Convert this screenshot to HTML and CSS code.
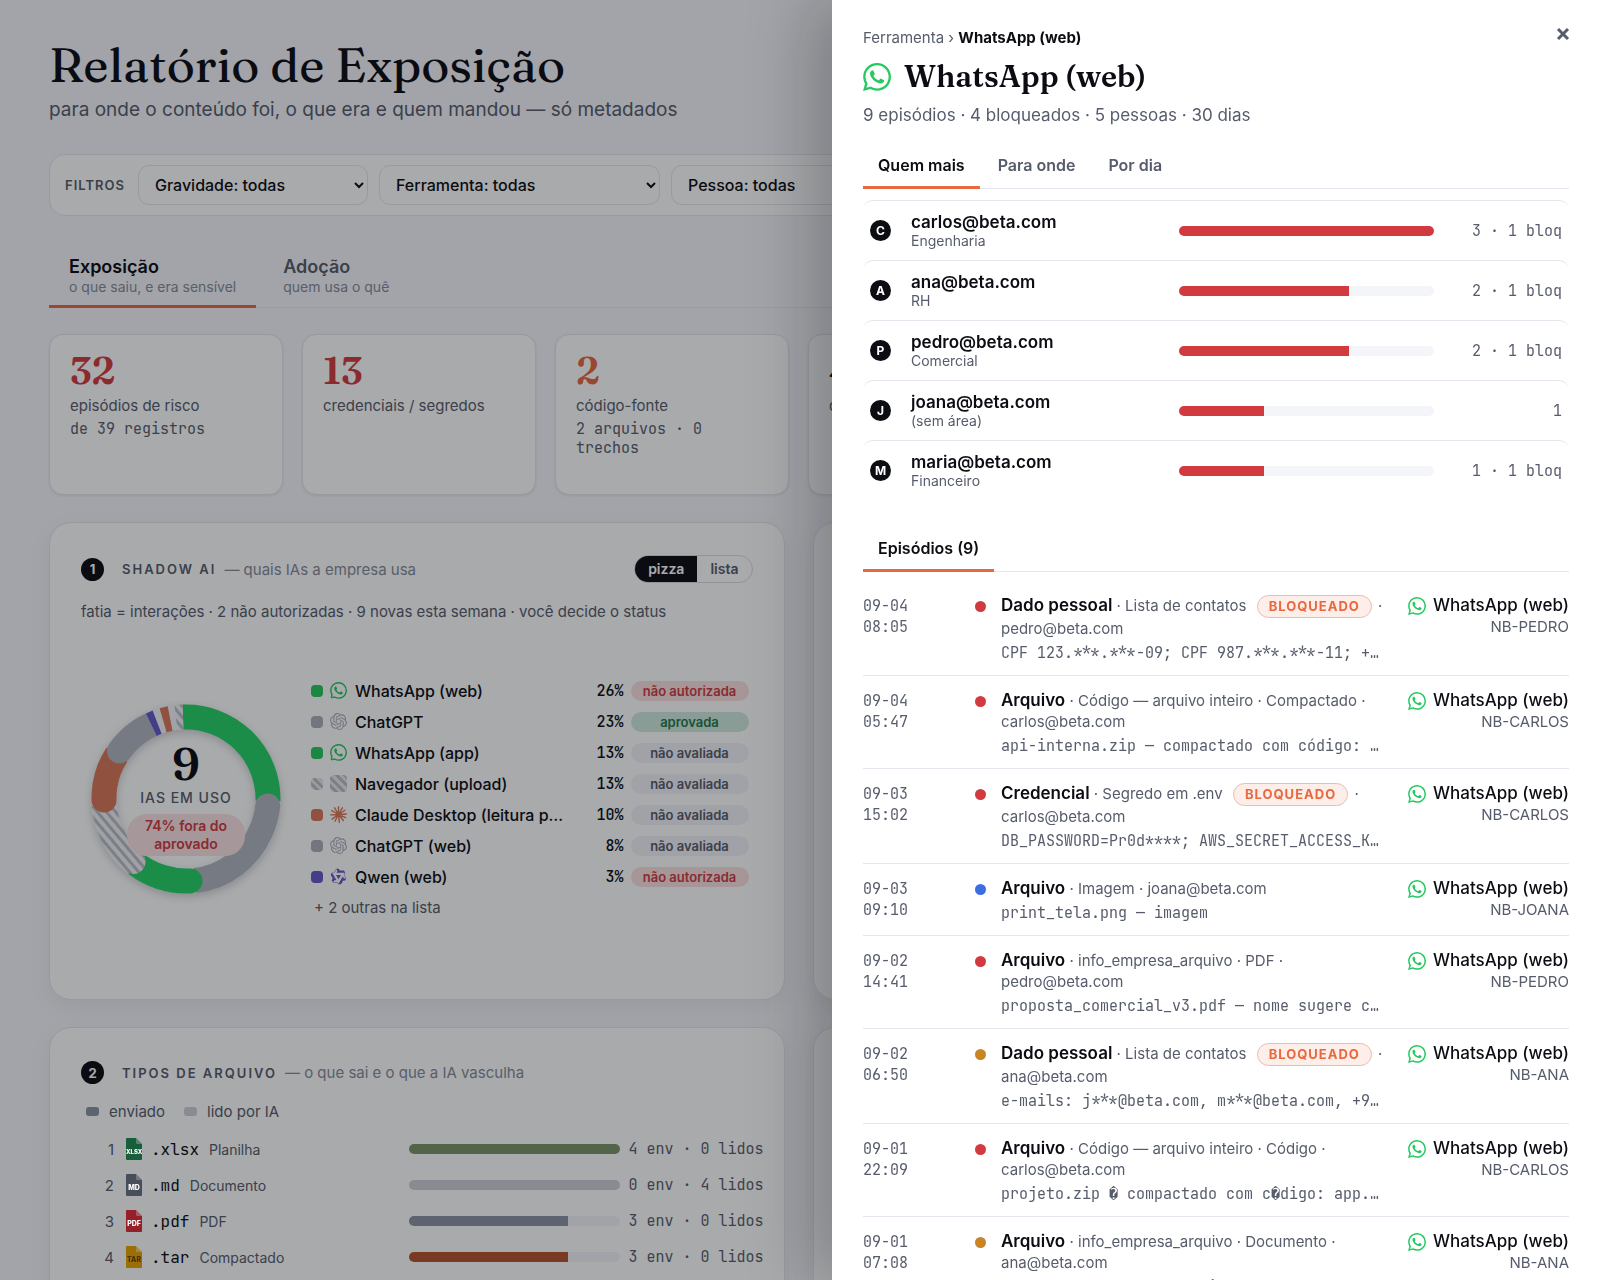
FILE: index.html
```html
<!DOCTYPE html>
<html lang="pt-BR">
<head>
  <meta charset="UTF-8" />
  <meta name="viewport" content="width=device-width, initial-scale=1" />
  <title>Relatório de Exposição</title>
  <link rel="stylesheet" href="styles.css">
</head>
<body>

<!-- ícones reutilizados -->
<svg class="sprite" aria-hidden="true">
  <symbol id="whatsapp" viewBox="0 0 24 24">
    <path d="M17.472 14.382c-.297-.149-1.758-.867-2.03-.967-.273-.099-.471-.148-.67.15-.197.297-.767.966-.94 1.164-.173.199-.347.223-.644.075-.297-.15-1.255-.463-2.39-1.475-.883-.788-1.48-1.761-1.653-2.059-.173-.297-.018-.458.13-.606.134-.133.298-.347.446-.52.149-.174.198-.298.298-.497.099-.198.05-.371-.025-.52-.075-.149-.669-1.612-.916-2.207-.242-.579-.487-.5-.669-.51-.173-.008-.371-.01-.57-.01-.198 0-.52.074-.792.372-.272.297-1.04 1.016-1.04 2.479 0 1.462 1.065 2.875 1.213 3.074.149.198 2.096 3.2 5.077 4.487.709.306 1.262.489 1.694.625.712.227 1.36.195 1.871.118.571-.085 1.758-.719 2.006-1.413.248-.694.248-1.289.173-1.413-.074-.124-.272-.198-.57-.347m-5.421 7.403h-.004a9.87 9.87 0 01-5.031-1.378l-.361-.214-3.741.982.998-3.648-.235-.374a9.86 9.86 0 01-1.51-5.26c.001-5.45 4.436-9.884 9.888-9.884 2.64 0 5.122 1.03 6.988 2.898a9.825 9.825 0 012.893 6.994c-.003 5.45-4.437 9.884-9.885 9.884m8.413-18.297A11.815 11.815 0 0012.05 0C5.495 0 .16 5.335.157 11.892c0 2.096.547 4.142 1.588 5.945L.057 24l6.305-1.654a11.882 11.882 0 005.683 1.448h.005c6.554 0 11.89-5.335 11.893-11.893a11.821 11.821 0 00-3.48-8.413z"/>
  </symbol>
  <symbol id="openai" viewBox="0 0 24 24">
    <path d="M22.2819 9.8211a5.9847 5.9847 0 0 0-.5157-4.9108 6.0462 6.0462 0 0 0-6.5098-2.9A6.0651 6.0651 0 0 0 4.9807 4.1818a5.9847 5.9847 0 0 0-3.9977 2.9 6.0462 6.0462 0 0 0 .7427 7.0966 5.98 5.98 0 0 0 .511 4.9107 6.051 6.051 0 0 0 6.5146 2.9001A5.9847 5.9847 0 0 0 13.2599 24a6.0557 6.0557 0 0 0 5.7718-4.2058 5.9894 5.9894 0 0 0 3.9977-2.9001 6.0557 6.0557 0 0 0-.7475-7.0729zm-9.022 12.6081a4.4755 4.4755 0 0 1-2.8764-1.0408l.1419-.0804 4.7783-2.7582a.7948.7948 0 0 0 .3927-.6813v-6.7369l2.02 1.1686a.071.071 0 0 1 .038.052v5.5826a4.504 4.504 0 0 1-4.4945 4.4944zm-9.6607-4.1254a4.4708 4.4708 0 0 1-.5346-3.0137l.142.0852 4.783 2.7582a.7712.7712 0 0 0 .7806 0l5.8428-3.3685v2.3324a.0804.0804 0 0 1-.0332.0615L9.74 19.9502a4.4992 4.4992 0 0 1-6.1408-1.6464zM2.3408 7.8956a4.485 4.485 0 0 1 2.3655-1.9728V11.6a.7664.7664 0 0 0 .3879.6765l5.8144 3.3543-2.0201 1.1685a.0757.0757 0 0 1-.071 0l-4.8303-2.7865A4.504 4.504 0 0 1 2.3408 7.872zm16.5963 3.8558L13.1038 8.364 15.1192 7.2a.0757.0757 0 0 1 .071 0l4.8303 2.7913a4.4944 4.4944 0 0 1-.6765 8.1042v-5.6772a.79.79 0 0 0-.407-.667zm2.0107-3.0231l-.142-.0852-4.7735-2.7818a.7759.7759 0 0 0-.7854 0L9.409 9.2297V6.8974a.0662.0662 0 0 1 .0284-.0615l4.8303-2.7866a4.4992 4.4992 0 0 1 6.6802 4.66zM8.3065 12.863l-2.02-1.1638a.0804.0804 0 0 1-.038-.0567V6.0742a4.4992 4.4992 0 0 1 7.3757-3.4537l-.142.0805L8.704 5.459a.7948.7948 0 0 0-.3927.6813zm1.0976-2.3654l2.602-1.4998 2.6069 1.4998v2.9994l-2.5974 1.4997-2.6067-1.4997Z"/>
  </symbol>
  <symbol id="claude" viewBox="0 0 24 24">
    <path d="M12 12V1M12 12l5.5-9.500M12 12l9-6M12 12l11-.8M12 12l10 4.500M12 12l6.800 8.500M12 12l1.200 11M12 12l-5 9.500M12 12l-9 6.500M12 12L1 12.500M12 12L2.500 6.500M12 12L6.500 2.500" fill="none" stroke="currentColor" stroke-width="2" stroke-linecap="round"/>
  </symbol>
  <symbol id="qwen" viewBox="0 0 24 24">
    <path fill-rule="evenodd" d="M12.604 1.34c.393.69.784 1.382 1.174 2.075a.18.18 0 00.157.091h5.552c.174 0 .322.11.446.327l1.454 2.57c.19.337.24.478.024.837-.26.43-.513.864-.76 1.3l-.367.658c-.106.196-.223.28-.04.512l2.652 4.637c.172.301.111.494-.043.77-.437.785-.882 1.564-1.335 2.34-.159.272-.352.375-.68.37-.777-.016-1.552-.01-2.327.016a.099.099 0 00-.081.05 575.097 575.097 0 01-2.705 4.74c-.169.293-.38.363-.725.364-.997.003-2.002.004-3.017.002a.537.537 0 01-.465-.271l-1.335-2.323a.09.09 0 00-.083-.049H4.982c-.285.03-.553-.001-.805-.092l-1.603-2.77a.543.543 0 01-.002-.54l1.207-2.12a.198.198 0 000-.197 550.951 550.951 0 01-1.875-3.272l-.79-1.395c-.16-.31-.173-.496.095-.965.465-.813.927-1.625 1.387-2.436.132-.234.304-.334.584-.335a338.3 338.3 0 012.589-.001.124.124 0 00.107-.063l2.806-4.895a.488.488 0 01.422-.246c.524-.001 1.053 0 1.583-.006L11.704 1c.341-.003.724.032.9.34zm-3.432.403a.06.06 0 00-.052.03L6.254 6.788a.157.157 0 01-.135.078H3.253c-.056 0-.07.025-.041.074l5.81 10.156c.025.042.013.062-.034.063l-2.795.015a.218.218 0 00-.2.116l-1.32 2.31c-.044.078-.021.118.068.118l5.716.008c.046 0 .08.02.104.061l1.403 2.454c.046.081.092.082.139 0l5.006-8.76.783-1.382a.055.055 0 01.096 0l1.424 2.53a.122.122 0 00.107.062l2.763-.02a.04.04 0 00.035-.02.041.041 0 000-.04l-2.9-5.086a.108.108 0 010-.113l.293-.507 1.12-1.977c.024-.041.012-.062-.035-.062H9.2c-.059 0-.073-.026-.043-.077l1.434-2.505a.107.107 0 000-.114L9.225 1.774a.06.06 0 00-.053-.031zm6.29 8.02c.046 0 .058.02.034.06l-.832 1.465-2.613 4.585a.056.056 0 01-.05.029.058.058 0 01-.05-.029L8.498 9.841c-.02-.034-.01-.052.028-.054l.216-.012 6.722-.012z"/>
  </symbol>
  <symbol id="file" viewBox="0 0 16 22">
    <path d="M1 0h9l6 6v15a1 1 0 0 1-1 1H1a1 1 0 0 1-1-1V1a1 1 0 0 1 1-1z"/>
    <path d="M10 0l6 6h-5a1 1 0 0 1-1-1z" fill="#fff" fill-opacity=".45"/>
  </symbol>
</svg>

<main class="page">
  <h1>Relatório de Exposição</h1>
  <p class="lead">para onde o conteúdo foi, o que era e quem mandou — só metadados</p>

  <form class="filters">
    <span class="filters-title">Filtros</span>
    <select class="f-grav" aria-label="Gravidade"><option>Gravidade: todas</option></select>
    <select class="f-ferr" aria-label="Ferramenta"><option>Ferramenta: todas</option></select>
    <select class="f-pess" aria-label="Pessoa"><option>Pessoa: todas</option></select>
  </form>

  <nav class="views">
    <button type="button" class="view active">Exposição<small>o que saiu, e era sensível</small></button>
    <button type="button" class="view">Adoção<small>quem usa o quê</small></button>
  </nav>

  <section class="kpis">
    <div class="kpi"><b class="red">32</b><span>episódios de risco</span><code>de 39 registros</code></div>
    <div class="kpi"><b class="red">13</b><span>credenciais / segredos</span></div>
    <div class="kpi"><b class="orange">2</b><span>código-fonte</span><code>2 arquivos · 0 trechos</code></div>
    <div class="kpi"><b>4</b><span>dados pessoais</span></div>
    <div class="kpi"></div>
    <div class="kpi"></div>
  </section>

  <div class="panels">
    <section class="panel">
      <header class="panel-head">
        <span class="num">1</span>
        <h2>Shadow AI</h2>
        <span class="hint">— quais IAs a empresa usa</span>
        <div class="toggle">
          <button type="button" class="on">pizza</button><button type="button">lista</button>
        </div>
      </header>
      <p class="note">fatia = interações · 2 não autorizadas · 9 novas esta semana · você decide o status</p>

      <div class="ai">
        <div class="donut">
          <svg viewBox="0 0 190 190" aria-hidden="true">
            <defs>
              <pattern id="stripes" width="7" height="7" patternUnits="userSpaceOnUse" patternTransform="rotate(50)">
                <rect width="7" height="7" fill="#f1f2f5"/>
                <rect width="7" height="3" fill="#b9bdc6"/>
              </pattern>
            </defs>
            <g class="ring">
              <circle class="seg base" cx="95" cy="95" r="82"/>
              <path class="seg s-green" d="M92 13.100A82 82 0 0 1 177 97"/>
              <path class="seg s-grey round" d="M176.700 102A82 82 0 0 1 170 127"/>
              <path class="seg s-grey" d="M170 127A82 82 0 0 1 104 176.500"/>
              <path class="seg s-green round" d="M99 176.900A82 82 0 0 1 70 173"/>
              <path class="seg s-green" d="M70 173A82 82 0 0 1 45 160"/>
              <path class="seg s-stripe round" d="M42 157.600A82 82 0 0 1 22 132"/>
              <path class="seg s-stripe" d="M22 132A82 82 0 0 1 13.200 101"/>
              <path class="seg s-orange round" d="M13 96A82 82 0 0 1 18 66"/>
              <path class="seg s-orange" d="M18 66A82 82 0 0 1 26 50.500"/>
              <path class="seg s-grey round" d="M28.500 47A82 82 0 0 1 38 36"/>
              <path class="seg s-grey" d="M38 36A82 82 0 0 1 60.300 20.700"/>
              <path class="seg s-violet" d="M60.300 20.700A82 82 0 0 1 66.100 18.200"/>
              <path class="seg s-orange" d="M72.100 16.300A82 82 0 0 1 79.100 14.600"/>
              <path class="seg s-stripe" d="M84.900 13.600A82 82 0 0 1 92 13.100"/>
            </g>
          </svg>
          <div class="donut-text">
            <b>9</b>
            <span>IAs em uso</span>
            <em>74% fora do aprovado</em>
          </div>
        </div>

        <ul class="ai-list">
          <li><i class="sw green"></i><svg class="ic green"><use href="#whatsapp"/></svg><span>WhatsApp (web)</span><code>26%</code><mark class="no">não autorizada</mark></li>
          <li><i class="sw grey"></i><svg class="ic grey"><use href="#openai"/></svg><span>ChatGPT</span><code>23%</code><mark class="ok">aprovada</mark></li>
          <li><i class="sw green"></i><svg class="ic green"><use href="#whatsapp"/></svg><span>WhatsApp (app)</span><code>13%</code><mark>não avaliada</mark></li>
          <li><i class="sw hatch"></i><i class="ic hatch"></i><span>Navegador (upload)</span><code>13%</code><mark>não avaliada</mark></li>
          <li><i class="sw clay"></i><svg class="ic clay"><use href="#claude"/></svg><span>Claude Desktop (leitura por IA)</span><code>10%</code><mark>não avaliada</mark></li>
          <li><i class="sw grey"></i><svg class="ic grey"><use href="#openai"/></svg><span>ChatGPT (web)</span><code>8%</code><mark>não avaliada</mark></li>
          <li><i class="sw violet"></i><svg class="ic violet"><use href="#qwen"/></svg><span>Qwen (web)</span><code>3%</code><mark class="no">não autorizada</mark></li>
          <li class="more">+ 2 outras na lista</li>
        </ul>
      </div>
    </section>
    <section class="panel"></section>

    <section class="panel">
      <header class="panel-head">
        <span class="num">2</span>
        <h2>Tipos de arquivo</h2>
        <span class="hint">— o que sai e o que a IA vasculha</span>
      </header>
      <div class="legend">
        <span><i class="sent"></i>enviado</span>
        <span><i class="read"></i>lido por IA</span>
      </div>
      <ol class="files">
        <li><span class="pos">1</span><span class="file xlsx"><svg><use href="#file"/></svg><small>XLSX</small></span><code>.xlsx</code><span class="kind">Planilha</span><div class="bar"><i class="b-olive" style="width:100%"></i></div><code class="qty">4 env · 0 lidos</code></li>
        <li><span class="pos">2</span><span class="file md"><svg><use href="#file"/></svg><small>MD</small></span><code>.md</code><span class="kind">Documento</span><div class="bar"><i class="b-light" style="width:100%"></i></div><code class="qty">0 env · 4 lidos</code></li>
        <li><span class="pos">3</span><span class="file pdf"><svg><use href="#file"/></svg><small>PDF</small></span><code>.pdf</code><span class="kind">PDF</span><div class="bar"><i class="b-slate" style="width:75%"></i></div><code class="qty">3 env · 0 lidos</code></li>
        <li><span class="pos">4</span><span class="file tar"><svg><use href="#file"/></svg><small>TAR</small></span><code>.tar</code><span class="kind">Compactado</span><div class="bar"><i class="b-rust" style="width:75%"></i></div><code class="qty">3 env · 0 lidos</code></li>
      </ol>
    </section>
    <section class="panel"></section>
  </div>
</main>

<div class="overlay"></div>

<aside class="drawer">
  <button type="button" class="close" aria-label="Fechar">
    <svg viewBox="0 0 14 14" aria-hidden="true"><path d="M2 2l10 10M12 2L2 12"/></svg>
  </button>
  <p class="crumb">Ferramenta › <b>WhatsApp (web)</b></p>
  <h2 class="drawer-title"><svg class="green"><use href="#whatsapp"/></svg>WhatsApp (web)</h2>
  <p class="summary">9 episódios · 4 bloqueados · 5 pessoas · 30 dias</p>

  <nav class="tabs">
    <button type="button" class="active">Quem mais</button>
    <button type="button">Para onde</button>
    <button type="button">Por dia</button>
  </nav>

  <ul class="people">
    <li><span class="avatar">C</span><div class="who"><b>carlos@beta.com</b><small>Engenharia</small></div><div class="bar"><i style="width:100%"></i></div><code>3 · 1 bloq</code></li>
    <li><span class="avatar">A</span><div class="who"><b>ana@beta.com</b><small>RH</small></div><div class="bar"><i style="width:66.7%"></i></div><code>2 · 1 bloq</code></li>
    <li><span class="avatar">P</span><div class="who"><b>pedro@beta.com</b><small>Comercial</small></div><div class="bar"><i style="width:66.7%"></i></div><code>2 · 1 bloq</code></li>
    <li><span class="avatar">J</span><div class="who"><b>joana@beta.com</b><small>(sem área)</small></div><div class="bar"><i style="width:33.3%"></i></div><code>1</code></li>
    <li><span class="avatar">M</span><div class="who"><b>maria@beta.com</b><small>Financeiro</small></div><div class="bar"><i style="width:33.3%"></i></div><code>1 · 1 bloq</code></li>
  </ul>

  <nav class="tabs tabs-ep">
    <button type="button" class="active">Episódios (9)</button>
  </nav>

  <ul class="episodes">
    <li>
      <time>09-04 08:05</time><i class="dot high"></i>
      <div class="ep"><p><b>Dado pessoal</b> · Lista de contatos <span class="tag">Bloqueado</span> · pedro@beta.com</p><code>CPF 123.***.***-09; CPF 987.***.***-11; +2 CPFs</code></div>
      <div class="tool"><span><svg class="green"><use href="#whatsapp"/></svg>WhatsApp (web)</span><small>NB-PEDRO</small></div>
    </li>
    <li>
      <time>09-04 05:47</time><i class="dot high"></i>
      <div class="ep"><p><b>Arquivo</b> · Código — arquivo inteiro · Compactado · carlos@beta.com</p><code>api-interna.zip — compactado com código: app.py</code></div>
      <div class="tool"><span><svg class="green"><use href="#whatsapp"/></svg>WhatsApp (web)</span><small>NB-CARLOS</small></div>
    </li>
    <li>
      <time>09-03 15:02</time><i class="dot high"></i>
      <div class="ep"><p><b>Credencial</b> · Segredo em .env <span class="tag">Bloqueado</span> · carlos@beta.com</p><code>DB_PASSWORD=Pr0d****; AWS_SECRET_ACCESS_KEY=****</code></div>
      <div class="tool"><span><svg class="green"><use href="#whatsapp"/></svg>WhatsApp (web)</span><small>NB-CARLOS</small></div>
    </li>
    <li>
      <time>09-03 09:10</time><i class="dot low"></i>
      <div class="ep"><p><b>Arquivo</b> · Imagem · joana@beta.com</p><code>print_tela.png — imagem</code></div>
      <div class="tool"><span><svg class="green"><use href="#whatsapp"/></svg>WhatsApp (web)</span><small>NB-JOANA</small></div>
    </li>
    <li>
      <time>09-02 14:41</time><i class="dot high"></i>
      <div class="ep"><p><b>Arquivo</b> · info_empresa_arquivo · PDF · pedro@beta.com</p><code>proposta_comercial_v3.pdf — nome sugere comercial</code></div>
      <div class="tool"><span><svg class="green"><use href="#whatsapp"/></svg>WhatsApp (web)</span><small>NB-PEDRO</small></div>
    </li>
    <li>
      <time>09-02 06:50</time><i class="dot mid"></i>
      <div class="ep"><p><b>Dado pessoal</b> · Lista de contatos <span class="tag">Bloqueado</span> · ana@beta.com</p><code>e-mails: j***@beta.com, m***@beta.com, +9 e-mails</code></div>
      <div class="tool"><span><svg class="green"><use href="#whatsapp"/></svg>WhatsApp (web)</span><small>NB-ANA</small></div>
    </li>
    <li>
      <time>09-01 22:09</time><i class="dot high"></i>
      <div class="ep"><p><b>Arquivo</b> · Código — arquivo inteiro · Código · carlos@beta.com</p><code>projeto.zip � compactado com c�digo: app.py, db.py</code></div>
      <div class="tool"><span><svg class="green"><use href="#whatsapp"/></svg>WhatsApp (web)</span><small>NB-CARLOS</small></div>
    </li>
    <li>
      <time>09-01 07:08</time><i class="dot mid"></i>
      <div class="ep"><p><b>Arquivo</b> · info_empresa_arquivo · Documento · ana@beta.com</p><code>contrato_prestacao_servico.docx — documento</code></div>
      <div class="tool"><span><svg class="green"><use href="#whatsapp"/></svg>WhatsApp (web)</span><small>NB-ANA</small></div>
    </li>
  </ul>
</aside>

</body>
</html>
```
FILE: styles.css
```css
* {
  box-sizing: border-box;
}
body {
  font-family: Inter, "Liberation Sans", sans-serif;
  background: #f5f6fa;
  margin: 0;
  color: #0b0d12;
  height: 100vh;
  overflow: hidden;
}
h1, h2, p, ul, ol {
  margin: 0;
  padding: 0;
}
ul, ol {
  list-style: none;
}
button {
  font: inherit;
  color: inherit;
  background: none;
  border: none;
  padding: 0;
  cursor: pointer;
}
code, time {
  font-family: "JetBrains Mono", "DejaVu Sans Mono", monospace;
  font-size: 15px;
  color: #565c6b;
}
svg {
  fill: currentColor;
  flex: none;
}
.sprite {
  position: absolute;
  width: 0;
  height: 0;
}
.green { color: #25c95f; }
.grey { color: #a9afba; }
.clay { color: #d97757; }
.violet { color: #6558c8; }
.red { color: #d13b40; }
.orange { color: #e8683f; }

/* página */
.page {
  padding: 35px 52px 0 49px;
}
h1 {
  font-family: Fraunces, "Liberation Serif", serif;
  font-size: 48px;
  font-weight: 500;
  line-height: 60px;
}
.lead {
  margin-top: 1px;
  font-size: 19px;
  line-height: 28px;
  color: #565c6b;
}
.filters {
  display: flex;
  align-items: center;
  gap: 11px;
  margin-top: 30px;
  height: 62px;
  padding: 0 15px;
  background: #fff;
  border: 1px solid #e3e6ec;
  border-radius: 16px;
}
.filters-title {
  width: 62px;
  font-size: 13px;
  font-weight: 600;
  letter-spacing: 1px;
  text-transform: uppercase;
  color: #565c6b;
}
.filters select {
  height: 40px;
  padding: 0 12px;
  font-family: inherit;
  font-size: 16px;
  font-weight: 500;
  color: #0b0d12;
  background: #fff;
  border: 1px solid #e3e6ec;
  border-radius: 11px;
}
.f-grav { width: 230px; }
.f-ferr { width: 281px; }
.f-pess { width: 260px; }

.views {
  display: flex;
  gap: 7px;
  margin-top: 29px;
  border-bottom: 1px solid #e3e6ec;
}
.view {
  padding: 10px 20px 10px;
  text-align: left;
  font-size: 18px;
  line-height: 23px;
  font-weight: 600;
  color: #565c6b;
  border-bottom: 3px solid transparent;
  margin-bottom: -1px;
}
.view.active {
  color: #0b0d12;
  border-color: #e8683f;
}
.view small {
  display: block;
  font-size: 14px;
  line-height: 17px;
  font-weight: normal;
  color: #858b99;
}

.kpis {
  display: grid;
  grid-template-columns: repeat(6, 1fr);
  gap: 19px;
  margin-top: 26px;
}
.kpi {
  min-height: 161px;
  padding: 15px 20px;
  background: #fff;
  border: 1px solid #e3e6ec;
  border-radius: 14px;
  box-shadow: 0 1px 3px rgba(11, 13, 18, 0.08);
}
.kpi b {
  display: block;
  font-family: Fraunces, "Liberation Serif", serif;
  font-size: 38px;
  line-height: 42px;
  font-weight: 600;
}
.kpi span {
  display: block;
  margin-top: 3px;
  font-size: 15px;
  line-height: 22px;
  color: #565c6b;
}
.kpi code {
  display: block;
  margin-top: 3px;
  line-height: 19px;
}

.panels {
  display: grid;
  grid-template-columns: 1fr 1fr;
  gap: 27px 28px;
  margin-top: 27px;
}
.panel {
  min-height: 478px;
  padding: 32px 31px;
  background: #fff;
  border: 1px solid #e3e6ec;
  border-radius: 22px;
  box-shadow: 0 8px 24px rgba(11, 13, 18, 0.06);
}
.panel-head {
  display: flex;
  align-items: center;
  min-height: 25px;
}
.num {
  display: grid;
  place-items: center;
  width: 23px;
  height: 23px;
  border-radius: 50%;
  background: #0b0d12;
  color: #fff;
  font-size: 13px;
  font-weight: bold;
}
.panel-head h2 {
  margin: 0 8px 0 18px;
  font-size: 13px;
  font-weight: 600;
  letter-spacing: 2px;
  text-transform: uppercase;
  color: #565c6b;
}
.hint {
  font-size: 15px;
  color: #858b99;
}
.toggle {
  display: flex;
  margin-left: auto;
  border: 1px solid #d9dce4;
  border-radius: 14px;
  overflow: hidden;
}
.toggle button {
  padding: 0 13px;
  font-size: 14px;
  line-height: 26px;
  font-weight: 600;
  color: #565c6b;
}
.toggle .on {
  background: #0b0d12;
  color: #fff;
}
.note {
  margin-top: 18px;
  font-size: 15px;
  line-height: 22px;
  color: #565c6b;
}

.ai {
  display: flex;
  align-items: center;
  gap: 30px;
  margin-top: 52px;
  padding: 0 4px 0 10px;
}
.donut {
  display: grid;
  flex: none;
  width: 190px;
  height: 190px;
}
.donut > * {
  grid-area: 1 / 1;
}
.donut svg {
  overflow: visible;
}
.ring {
  filter: drop-shadow(0 3px 4px rgba(11, 13, 18, 0.2));
}
.seg {
  fill: none;
  stroke: currentColor;
  stroke-width: 25;
}
.round { stroke-linecap: round; }
.base { color: #f4f5f9; }
.s-green { color: #25d366; }
.s-grey { color: #b0b5c0; }
.s-orange { color: #d97757; }
.s-violet { color: #6558c8; }
.s-stripe { stroke: url(#stripes); }
.donut-text {
  display: flex;
  flex-direction: column;
  align-items: center;
  padding-top: 36px;
}
.donut-text b {
  font-family: Fraunces, "Liberation Serif", serif;
  font-size: 44px;
  line-height: 48px;
  font-weight: 600;
}
.donut-text span {
  font-size: 14px;
  line-height: 20px;
  font-weight: 500;
  letter-spacing: 1px;
  text-transform: uppercase;
  color: #565c6b;
}
.donut-text em {
  width: 118px;
  margin-top: 6px;
  padding: 3px 8px;
  border-radius: 20px;
  background: #fae3e4;
  color: #d13b40;
  font-size: 14px;
  line-height: 18px;
  font-style: normal;
  font-weight: 600;
  text-align: center;
}

.ai-list {
  flex: 1;
  min-width: 0;
}
.ai-list li {
  display: flex;
  align-items: center;
  height: 31px;
  font-size: 16px;
  font-weight: 500;
}
.sw {
  flex: none;
  width: 12px;
  height: 12px;
  margin-right: 7px;
  border-radius: 4px;
  background: currentColor;
}
.ic {
  flex: none;
  width: 17px;
  height: 17px;
  margin-right: 8px;
  border-radius: 4px;
}
.hatch {
  background: repeating-linear-gradient(45deg, #e6e8ec 0 3px, #b9bdc6 3px 6px);
}
.ai-list span {
  flex: 1;
  max-width: 209px;
  overflow: hidden;
  text-overflow: ellipsis;
  white-space: nowrap;
}
.ai-list code {
  margin-left: auto;
  font-weight: 500;
  color: #0b0d12;
}
.ai-list mark {
  width: 118px;
  margin-left: 7px;
  border-radius: 10px;
  background: #f2f3f8;
  color: #565c6b;
  font-size: 13px;
  line-height: 20px;
  font-weight: 600;
  text-align: center;
}
.ai-list .no { background: #fae0e1; color: #d13b40; }
.ai-list .ok { background: #d0eadd; color: #1f7a4a; }
.ai-list .more {
  padding-left: 3px;
  font-size: 15px;
  font-weight: normal;
  color: #565c6b;
}

.legend {
  display: flex;
  gap: 19px;
  margin-top: 16px;
  padding-left: 5px;
  font-size: 15px;
  line-height: 22px;
  color: #565c6b;
}
.legend i {
  display: inline-block;
  width: 13px;
  height: 9px;
  margin-right: 10px;
  border-radius: 3px;
  vertical-align: 1px;
}
.sent { background: #8a94a3; }
.read { background: #cdd0d6; }
.files {
  margin: 8px -11px 0 0;
}
.files li {
  display: flex;
  align-items: center;
  height: 36px;
}
.pos {
  width: 33px;
  margin-right: 12px;
  text-align: right;
  font-size: 15px;
  color: #565c6b;
}
.file {
  display: grid;
  width: 16px;
  height: 22px;
  margin-right: 9px;
}
.file > * {
  grid-area: 1 / 1;
  width: 16px;
  height: 22px;
}
.file small {
  z-index: 1;
  padding-top: 9px;
  font-size: 7px;
  line-height: 10px;
  font-weight: 800;
  text-align: center;
  color: #fff;
}
.xlsx { color: #1f8a50; }
.file.xlsx small { font-size: 6px; }
.md { color: #6b7280; }
.pdf { color: #e02b33; }
.tar { color: #eaa400; }
.file.tar small { color: #4a3200; }
.files code {
  font-size: 16px;
  color: #0b0d12;
}
.kind {
  flex: 1;
  margin-left: 10px;
  font-size: 14px;
  color: #565c6b;
}
.bar {
  width: 211px;
  height: 10px;
  border-radius: 5px;
  background: #f4f5f9;
  overflow: hidden;
}
.bar i {
  display: block;
  height: 100%;
  background: #d13b40;
}
.bar .b-olive { background: #7b9469; }
.bar .b-light { background: #cdd0d6; }
.bar .b-slate { background: #8a94a3; }
.bar .b-rust { background: #b5532f; }
.files .qty {
  margin-left: 8px;
  font-size: 15px;
  color: #565c6b;
}

/* painel lateral */
.overlay {
  position: fixed;
  inset: 0;
  background: rgba(10, 12, 16, 0.35);
}
.drawer {
  position: fixed;
  top: 0;
  right: 0;
  bottom: 0;
  width: 48%;
  padding: 27px 31px 0;
  background: #fff;
  box-shadow: -20px 0 60px rgba(10, 12, 16, 0.25);
  overflow: hidden;
}
.close {
  position: absolute;
  top: 27px;
  right: 30px;
  color: #565c6b;
}
.close svg {
  display: block;
  width: 14px;
  height: 14px;
  stroke: currentColor;
  stroke-width: 3;
}
.crumb {
  font-size: 15px;
  line-height: 22px;
  color: #565c6b;
}
.crumb b {
  color: #0b0d12;
}
.drawer-title {
  display: flex;
  align-items: center;
  gap: 13px;
  margin-top: 8px;
  font-family: Fraunces, "Liberation Serif", serif;
  font-size: 30px;
  line-height: 40px;
  font-weight: 600;
}
.drawer-title svg {
  width: 28px;
  height: 28px;
}
.summary {
  margin-top: 6px;
  font-size: 17px;
  line-height: 24px;
  color: #565c6b;
}
.tabs {
  display: flex;
  margin-top: 18px;
  border-bottom: 1px solid #e3e6ec;
}
.tabs button {
  padding: 8px 15px 9px;
  margin: 0 3px -1px 0;
  font-size: 16px;
  line-height: 24px;
  font-weight: 600;
  color: #565c6b;
  border-bottom: 3px solid transparent;
}
.tabs .active {
  color: #0b0d12;
  border-color: #e8683f;
}
.people {
  margin-top: 11px;
}
.people li {
  display: flex;
  align-items: center;
  height: 60px;
  padding: 0 7px;
  border-top: 1px solid #e3e6ec;
  border-radius: 10px;
}
.avatar {
  display: grid;
  place-items: center;
  width: 21px;
  height: 21px;
  margin-right: 20px;
  border-radius: 50%;
  background: #0b0d12;
  color: #fff;
  font-size: 12px;
  font-weight: bold;
}
.who {
  flex: 1;
}
.who b {
  display: block;
  font-size: 17px;
  line-height: 20px;
  font-weight: 600;
}
.who small {
  display: block;
  font-size: 14px;
  line-height: 17px;
  color: #565c6b;
}
.people .bar {
  width: 255px;
}
.people code {
  width: 128px;
  text-align: right;
}
.tabs-ep {
  margin-top: 28px;
}
.episodes {
  margin-top: 9px;
}
.episodes li {
  display: grid;
  grid-template-columns: 112px 11px 1fr auto;
  align-items: start;
  padding: 14px 0 11px;
  border-bottom: 1px solid #e3e6ec;
}
time {
  width: 60px;
  margin-top: 1px;
  line-height: 21px;
}
.dot {
  width: 11px;
  height: 11px;
  margin-top: 6px;
  border-radius: 50%;
}
.high { background: #d13b40; }
.mid { background: #c98423; }
.low { background: #3b6fe0; }
.ep {
  min-width: 0;
  margin-left: 15px;
}
.ep p {
  font-size: 15px;
  line-height: 21px;
  color: #565c6b;
}
.ep b {
  font-size: 17px;
  font-weight: 600;
  color: #0b0d12;
}
.tag {
  display: inline-block;
  margin: 0 2px 0 6px;
  padding: 0 11px;
  border: 1px solid #f6b9a4;
  border-radius: 12px;
  background: #fdeee9;
  color: #e8683f;
  font-size: 13px;
  line-height: 21px;
  font-weight: bold;
  letter-spacing: 1px;
  text-transform: uppercase;
}
.ep code {
  display: block;
  margin-top: 4px;
  line-height: 21px;
  overflow: hidden;
  text-overflow: ellipsis;
  white-space: nowrap;
}
.tool {
  margin-left: 22px;
  text-align: right;
}
.tool span {
  display: flex;
  align-items: center;
  gap: 7px;
  font-size: 17px;
  line-height: 21px;
  font-weight: 500;
}
.tool svg {
  width: 18px;
  height: 18px;
}
.tool small {
  display: block;
  font-size: 15px;
  line-height: 21px;
  color: #565c6b;
}
```
